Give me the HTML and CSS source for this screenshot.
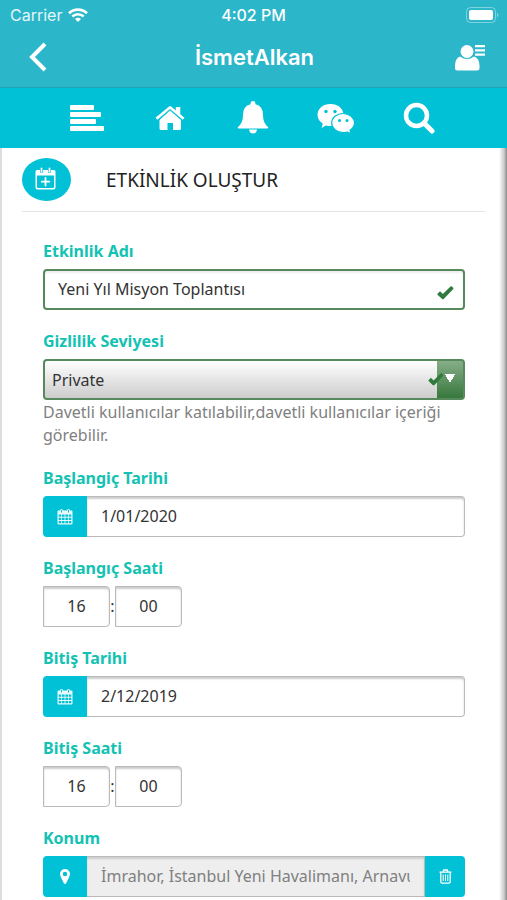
FILE: index.html
```html
<!DOCTYPE html>
<html lang="tr">
<head>
<meta charset="utf-8">
<meta name="viewport" content="width=device-width, initial-scale=1">
<title>Etkinlik Oluştur</title>
<link rel="stylesheet" href="styles.css">
</head>
<body>
<svg class="symbols" aria-hidden="true">
  <symbol id="calendar" viewBox="0 0 16 16">
    <path fill="currentColor" fill-rule="evenodd" d="M1.5 2H3a1.5 1.5 0 0 1 3 0h4a1.5 1.5 0 0 1 3 0h1.500a1 1 0 0 1 1 1v12a1 1 0 0 1-1 1h-13a1 1 0 0 1-1-1V3a1 1 0 0 1 1-1zM1.700 6v2.300h2.500V6zm3.300 0v2.300h2.600V6zm3.400 0v2.300H11V6zm3.400 0v2.300h2.500V6zM1.700 9.200v2.300h2.500V9.200zm3.300 0v2.300h2.600V9.200zm3.400 0v2.300H11V9.200zm3.400 0v2.300h2.500V9.200zM1.700 12.400v2.400h2.500v-2.400zm3.300 0v2.400h2.600v-2.400zm3.400 0v2.400H11v-2.400zm3.400 0v2.400h2.500v-2.400z"/>
    <path d="M4.500 1.500v2.500M11.500 1.500v2.500" stroke="#00c1d6" stroke-width="1"/>
  </symbol>
  <symbol id="check" viewBox="0 0 16 14">
    <path fill="#2f7a3c" d="M0 7.800 2.500 5.200 5.400 8.100 13 .5a1 1 0 0 1 1.400 0l1.200 1.300a1 1 0 0 1 0 1.400L6.400 12.800a1.400 1.400 0 0 1-2 0L.3 9a.9.900 0 0 1-.3-1.200z"/>
  </symbol>
</svg>

<header class="top">
  <div class="status">
    <div class="carrier">Carrier
      <svg width="20" height="14" viewBox="0 0 20 14" aria-hidden="true"><g fill="none" stroke="#fff" stroke-width="2.600"><path d="M1 5.200a13 13 0 0 1 18 0"/><path d="M4.300 8.500a8.300 8.300 0 0 1 11.400 0"/></g><path fill="#fff" d="M7 11a4.500 4.500 0 0 1 6 0l-3 3z"/></svg>
    </div>
    <div class="clock">4:02 PM</div>
    <div class="battery">
      <svg width="33" height="17" viewBox="0 0 33 17" aria-hidden="true"><rect x=".5" y=".5" width="29" height="15" rx="4" fill="none" stroke="#fff" stroke-opacity=".4"/><rect x="3" y="3" width="24" height="10" rx="2" fill="#fff"/><path fill="#fff" fill-opacity=".4" d="M31 5.500q3 2.500 0 5z"/></svg>
    </div>
  </div>
  <div class="titlebar">
    <button class="bare" type="button" aria-label="Geri">
      <svg width="20" height="30" viewBox="0 0 20 30"><path d="M17 2 4 15l13 13" fill="none" stroke="#fff" stroke-width="4"/></svg>
    </button>
    <h1>İsmetAlkan</h1>
    <button class="bare profile" type="button" aria-label="Profil">
      <svg width="30" height="27" viewBox="0 0 30 27" fill="#fff"><circle cx="12" cy="7.500" r="6.500"/><path d="M5 12.500q7 5 14 0 5.500 2 5.500 9V24q0 2.500-2.500 2.500H2.500Q0 26.500 0 24v-2.500q0-7 5-9z"/><path d="M20 1h10v2.200H20zM20 5.300h10v2.200H20zM20 9.500h10v2.200H20z"/></svg>
    </button>
  </div>
</header>

<nav class="tabs">
  <a href="#" aria-label="Akış"><svg width="34" height="28" viewBox="0 0 34 28" fill="#fff"><rect width="24" height="5" y="1" rx="1"/><rect y="8" width="31" height="5" rx="1"/><rect y="15" width="26" height="5" rx="1"/><rect y="22" width="34" height="5" rx="1"/></svg></a>
  <a href="#" aria-label="Ana sayfa"><svg width="30" height="26" viewBox="0 0 30 26" fill="#fff"><path d="M15 5.500 26 15v8.500q0 1.500-1.500 1.500H18v-7h-5.500v7H6q-1.500 0-1.500-1.500V15z"/><path d="M14 1.600a1.700 1.700 0 0 1 2.200 0L20.800 5.500V2h4.500v7.200l4.200 3.600-1.700 2L15 4.100 2.400 14.800l-1.900-2z"/></svg></a>
  <a href="#" aria-label="Bildirimler"><svg width="32" height="34" viewBox="0 0 32 34" fill="#fff"><path d="M16 0q2.500 0 2.500 3.200Q26 5 26 14q0 8 5 12 1 1.500-1 1.500H2Q0 27.500 1 26q5-4 5-12 0-9 7.500-10.800Q13.500 0 16 0z"/><path d="M12 28.500h8q-.5 4-4 4t-4-4z"/></svg></a>
  <a href="#" aria-label="Mesajlar"><svg width="38" height="31" viewBox="0 0 38 31"><path fill="#fff" d="M13.500 1C21 1 26.500 5.500 26.500 12S21 23 13.500 23q-2.200 0-4.500-.6L4.500 25l1.300-4.500Q.5 17 .5 12C.5 5.500 6 1 13.500 1z"/><path fill="#fff" stroke="#00c1d6" stroke-width="1.200" d="M26 10.500c-6.300 0-11.300 4.200-11.300 9.500s5 9.600 11.300 9.600q2 0 4-.6l4 1.900-1-3.700q4.500-3 4.500-7.200c0-5.300-5.200-9.500-11.500-9.500z"/><g fill="#00c1d6"><circle cx="9" cy="8.500" r="1.700"/><circle cx="18" cy="8.500" r="1.700"/><circle cx="22.500" cy="17.500" r="1.500"/><circle cx="30" cy="17.500" r="1.500"/></g></svg></a>
  <a href="#" aria-label="Ara"><svg width="32" height="32" viewBox="0 0 32 32"><circle cx="13.500" cy="13.500" r="10.500" fill="none" stroke="#fff" stroke-width="4.500"/><path d="m21 21 8 8" stroke="#fff" stroke-width="5" stroke-linecap="round"/></svg></a>
</nav>

<main class="page">
  <div class="heading">
    <span class="badge"><svg width="22" height="24" viewBox="0 0 22 24"><path fill="#fff" fill-rule="evenodd" d="M2 3H5v1.500a1.500 1.500 0 0 0 3 0V3h5v1.500a1.500 1.500 0 0 0 3 0V3h3Q20.500 3 20.500 4.500v16q0 2-2 2h-16q-2 0-2-2v-16Q.5 3 2 3zM2 8.500V20q0 1 1 1h15q1 0 1-1V8.500z"/><path stroke="#fff" stroke-width="1.800" stroke-linecap="round" d="M6.500 1.500v3M14.500 1.500v3M10.500 11v7.500M6.800 14.700h7.500"/></svg></span>
    <h2>ETKİNLİK OLUŞTUR</h2>
  </div>

  <form class="form">
    <div class="group">
      <label for="name">Etkinlik Adı</label>
      <div class="field">
        <input class="box valid" id="name" type="text" value="Yeni Yıl Misyon Toplantısı">
        <svg class="tick" width="17" height="14"><use href="#check"/></svg>
      </div>
    </div>
    <div class="group">
      <label for="privacy">Gizlilik Seviyesi</label>
      <div class="field">
        <select id="privacy"><option>Private</option></select>
        <svg class="tick tick-select" width="16" height="13"><use href="#check"/></svg>
      </div>
      <p class="help">Davetli kullanıcılar katılabilir,davetli kullanıcılar içeriği görebilir.</p>
    </div>
    <div class="group">
      <label for="start-date">Başlangiç Tarihi</label>
      <div class="field">
        <span class="addon"><svg width="16" height="17"><use href="#calendar"/></svg></span>
        <input class="box joined" id="start-date" type="text" value="1/01/2020">
      </div>
    </div>
    <div class="group">
      <label for="start-hour">Başlangıç Saati</label>
      <div class="field time">
        <input class="box" id="start-hour" type="text" value="16"><span>:</span><input class="box" aria-label="Başlangıç dakikası" type="text" value="00">
      </div>
    </div>
    <div class="group">
      <label for="end-date">Bitiş Tarihi</label>
      <div class="field">
        <span class="addon"><svg width="16" height="17"><use href="#calendar"/></svg></span>
        <input class="box joined" id="end-date" type="text" value="2/12/2019">
      </div>
    </div>
    <div class="group">
      <label for="end-hour">Bitiş Saati</label>
      <div class="field time">
        <input class="box" id="end-hour" type="text" value="16"><span>:</span><input class="box" aria-label="Bitiş dakikası" type="text" value="00">
      </div>
    </div>
    <div class="group">
      <label for="place">Konum</label>
      <div class="field">
        <span class="addon"><svg width="10" height="15" viewBox="0 0 10 15"><path fill="#fff" fill-rule="evenodd" d="M5 0a5 5 0 0 1 5 5c0 2-1.500 4.500-3.800 9.200q-1.200 1.600-2.400 0C1.500 9.500 0 7 0 5a5 5 0 0 1 5-5zm0 2.800a2.200 2.200 0 1 0 0 4.400 2.200 2.200 0 0 0 0-4.400z"/></svg></span>
        <input class="box joined place" id="place" type="text" readonly value="İmrahor, İstanbul Yeni Havalimanı, Arnavutköy">
        <button class="clear" type="button" aria-label="Konumu sil"><svg width="13" height="15" viewBox="0 0 13 15" fill="none" stroke="#fff"><path stroke-width="1.300" d="M.5 3.200h12M4 3l.7-2h3.600L9 3M1.800 3.500v9.300q0 1.400 1.400 1.400h6.600q1.400 0 1.400-1.400V3.500"/><path d="M4.200 5.500v6.500M6.500 5.500v6.500M8.800 5.500v6.500"/></svg></button>
      </div>
    </div>
  </form>
</main>
</body>
</html>
```
FILE: styles.css
```css
* { box-sizing: border-box; }

body {
  margin: 0;
  min-height: 100vh;
  display: flex;
  flex-direction: column;
  background: #fff;
  color: #333;
  font-family: "Noto Sans", "Open Sans", sans-serif;
  font-size: 16px;
}

svg { display: block; }
.symbols { position: absolute; width: 0; height: 0; }
input, select, button { font: inherit; margin: 0; }

.top {
  height: 88px;
  background: #2cb6c9;
  border-bottom: 1px solid #1fa3b5;
  color: #fff;
  font-family: Inter, "Liberation Sans", sans-serif;
}

.status {
  display: grid;
  grid-template-columns: 1fr auto 1fr;
  align-items: center;
  height: 30px;
  padding: 0 8px;
}

.carrier { display: flex; align-items: center; gap: 6px; padding-left: 2px; color: #e4f6f9; }
.clock { font-weight: 500; }
.battery { display: flex; justify-content: flex-end; }

.titlebar {
  display: grid;
  grid-template-columns: 1fr auto 1fr;
  align-items: center;
  height: 54px;
  padding: 0 22px 0 28px;
}

.titlebar h1 { margin: 0 4px 0 0; font-size: 22px; font-weight: 600; }

.bare { padding: 0; border: 0; background: none; justify-self: start; }
.profile { justify-self: end; }

.tabs {
  display: grid;
  grid-template-columns: repeat(5, 1fr);
  height: 60px;
  padding: 0 47px 0 45px;
  background: #00c1d6;
}

.tabs a { display: flex; align-items: center; justify-content: center; }

.page {
  flex: 1;
  padding: 10px 22px 0 20px;
  border-left: 2px solid #ddd;
  background: linear-gradient(to left, #888, #ccc 3px, #fff 8px);
}

.heading {
  display: flex;
  align-items: center;
  gap: 35px;
  padding-bottom: 10px;
  border-bottom: 1px solid #e4e4e4;
}

.heading h2 { margin: 0; font-size: 19px; font-weight: 400; line-height: 24px; color: #222; }

.badge {
  display: flex;
  align-items: center;
  justify-content: center;
  width: 49px;
  height: 43px;
  padding: 0 2px 2px 0;
  border-radius: 50%;
  background: #00c1d6;
}

.form { padding: 27px 20px 0 21px; }

.group { margin-bottom: 19px; }
.group:last-child { margin-bottom: 0; }

.group label {
  display: block;
  margin-bottom: 6px;
  color: #12c2b2;
  font-weight: 700;
  line-height: 24px;
}

.field { position: relative; display: flex; height: 41px; }

.box {
  flex: 1;
  min-width: 0;
  padding: 0 14px 2px;
  border: 1px solid #bbb;
  border-radius: 4px;
  background: #fff;
  box-shadow: inset 0 2px 2px #ccc;
  color: #333;
}

.valid { border: 2px solid #568a5c; box-shadow: inset 0 2px 2px #eee; padding: 0 13px 2px; }
.joined { border-left: 0; border-radius: 0 4px 4px 0; }

.tick { position: absolute; right: 11px; top: 17px; pointer-events: none; }
.tick-select { right: 21px; top: 14px; }

select {
  flex: 1;
  appearance: none;
  padding: 0 40px 0 7px;
  border: 2px solid #568a5c;
  border-radius: 4px;
  background:
    conic-gradient(from -30deg at 50% 100%, #fff 60deg, transparent 0) right 8px top 13px / 10px 9px no-repeat,
    linear-gradient(#86ad88, #37783d) right / 26px 100% no-repeat,
    linear-gradient(#fff, #ccc);
  color: #333;
}

.help { margin: 1px 0 0; color: #808080; line-height: 23px; }

.addon, .clear {
  display: flex;
  align-items: center;
  justify-content: center;
  width: 44px;
  border: 0;
  background: #00c1d6;
  color: #e8fafc;
  border-radius: 4px 0 0 4px;
}

.clear { width: 40px; padding: 0; border-radius: 0 4px 4px 0; }
.place { border-radius: 0; background: #eee; color: #808080; }

.time { align-items: stretch; }
.time .box { flex: 0 0 67px; padding: 0 0 2px; text-align: center; border-radius: 0 4px 4px 0; }
.time span { width: 5px; line-height: 41px; text-align: center; }
```
